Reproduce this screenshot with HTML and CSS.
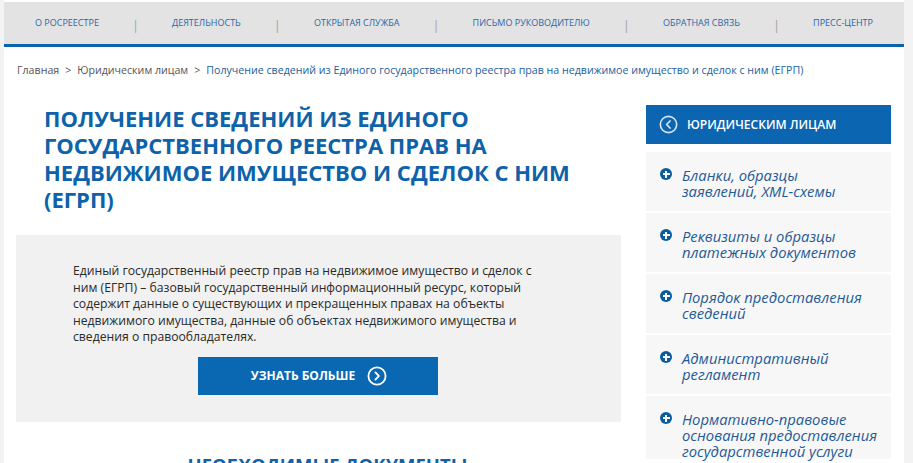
FILE: index.html
```html
<!DOCTYPE html>
<html lang="ru">
<head>
<meta charset="utf-8">
<title>Получение сведений из ЕГРП</title>
<link rel="stylesheet" href="styles.css">
</head>
<body>
<div class="page">
  <nav class="nav">
    <a class="nav-item">О Росреестре</a><span class="sep">|</span>
    <a class="nav-item">Деятельность</a><span class="sep">|</span>
    <a class="nav-item">Открытая служба</a><span class="sep">|</span>
    <a class="nav-item">Письмо руководителю</a><span class="sep">|</span>
    <a class="nav-item">Обратная связь</a><span class="sep">|</span>
    <a class="nav-item">Пресс-центр</a>
  </nav>
  <div class="crumbs">
    <span>Главная</span><span class="gt">&gt;</span><span>Юридическим лицам</span><span class="gt">&gt;</span><span class="current">Получение сведений из Единого государственного реестра прав на недвижимое имущество и сделок с ним (ЕГРП)</span>
  </div>
  <div class="columns">
    <main class="main">
      <h1 class="title">Получение сведений из Единого государственного реестра прав на недвижимое имущество и сделок с ним (ЕГРП)</h1>
      <section class="info">
        <p class="info-text">Единый государственный реестр прав на недвижимое имущество и сделок с ним (ЕГРП) – базовый государственный информационный ресурс, который содержит данные о существующих и прекращенных правах на объекты недвижимого имущества, данные об объектах недвижимого имущества и сведения о правообладателях.</p>
        <a class="btn">Узнать больше
          <svg class="btn-icon" width="20" height="20" viewBox="0 0 20 20"><circle cx="10" cy="10" r="8.6" fill="none" stroke="#fff" stroke-width="1.8"/><path d="M8.4 6.4 L11.9 10 L8.4 13.6" fill="none" stroke="#fff" stroke-width="1.9" stroke-linecap="round" stroke-linejoin="round"/></svg>
        </a>
      </section>
      <h2 class="subtitle">Необходимые документы</h2>
    </main>
    <aside class="side">
      <div class="side-head">
        <svg class="side-head-icon" width="19" height="19" viewBox="0 0 20 20"><circle cx="10" cy="10" r="8.6" fill="none" stroke="#d6e6f4" stroke-width="1.7"/><path d="M11.6 6.3 L8 10 L11.6 13.7" fill="none" stroke="#d6e6f4" stroke-width="1.8" stroke-linecap="round" stroke-linejoin="round"/></svg>
        <span>Юридическим лицам</span>
      </div>
      <ul class="side-list">
        <li class="side-item"><span class="plus"></span><span class="side-text narrow">Бланки, образцы заявлений, XML-схемы</span></li>
        <li class="side-item"><span class="plus"></span><span class="side-text">Реквизиты и образцы платежных документов</span></li>
        <li class="side-item"><span class="plus"></span><span class="side-text">Порядок предоставления сведений</span></li>
        <li class="side-item"><span class="plus"></span><span class="side-text">Административный регламент</span></li>
        <li class="side-item"><span class="plus"></span><span class="side-text">Нормативно-правовые основания предоставления государственной услуги</span></li>
      </ul>
    </aside>
  </div>
</div>
</body>
</html>
```

FILE: styles.css
```css
html, body {
  margin: 0;
  padding: 0;
}
body {
  background: #f3f3f3;
  font-family: "Open Sans", "Noto Sans", sans-serif;
  height: 463px;
  overflow: hidden;
}
.page {
  margin-left: 4px;
  width: 900px;
  min-height: 463px;
  background: #fff;
  padding-top: 2px;
}
.nav {
  height: 42px;
  background: #e3e3e3;
  border-bottom: 3px solid #0a63ab;
  display: flex;
  align-items: center;
  justify-content: space-between;
  padding: 0 31px;
  box-sizing: content-box;
}
.nav-item {
  font-size: 9px;
  text-transform: uppercase;
  color: #2c66a8;
  line-height: 14px;
}
.sep {
  color: #a0a0a0;
  font-size: 12px;
  line-height: 14px;
  margin-top: 6px;
}
.crumbs {
  margin-top: 15px;
  padding-left: 13px;
  font-size: 10.65px;
  line-height: 16px;
  color: #555;
  white-space: nowrap;
}
.crumbs .gt {
  margin: 0 6px;
}
.crumbs .current {
  color: #22609f;
}
.columns {
  display: flex;
  margin-top: 27px;
  padding-left: 12px;
}
.main {
  width: 605px;
}
.title {
  margin: 0;
  padding-left: 28px;
  width: 540px;
  font-size: 22px;
  line-height: 27px;
  font-weight: 700;
  color: #0d62a9;
  text-transform: uppercase;
}
.info {
  margin-top: 22px;
  background: #f1f1f1;
  padding: 28px 62px 27px 57px;
  display: flex;
  flex-direction: column;
  align-items: flex-start;
}
.info-text {
  margin: 0;
  font-size: 12.2px;
  line-height: 16.5px;
  color: #2a2a2a;
}
.btn {
  margin-top: 11px;
  margin-left: 125px;
  width: 240px;
  height: 38px;
  background: #0a67b1;
  color: #fff;
  display: flex;
  align-items: center;
  justify-content: center;
  gap: 12px;
  font-size: 12px;
  font-weight: 700;
  text-transform: uppercase;
  padding-left: 2px;
  box-sizing: border-box;
}
.btn-icon {
  display: block;
}
.subtitle {
  margin: 31px 0 0;
  text-align: center;
  padding-left: 18px;
  font-size: 18.5px;
  line-height: 24px;
  font-weight: 700;
  color: #0d62a9;
  text-transform: uppercase;
}
.side {
  margin-left: 25px;
  width: 245px;
}
.side-head {
  height: 39px;
  background: #0b65b0;
  display: flex;
  align-items: center;
  padding-left: 13px;
  gap: 9px;
  color: #fff;
  font-size: 12.1px;
  font-weight: 600;
  text-transform: uppercase;
}
.side-head-icon {
  display: block;
}
.side-list {
  list-style: none;
  margin: 8px 0 0;
  padding: 0;
  display: flex;
  flex-direction: column;
  gap: 2px;
}
.side-item {
  min-height: 59px;
  background: #f7f7f7;
  display: flex;
  align-items: flex-start;
  padding: 15px 0 0 14px;
  box-sizing: border-box;
  gap: 10px;
}
.plus {
  flex: none;
  width: 12px;
  height: 12px;
  border-radius: 50%;
  background: #0b5c9f;
  margin-top: 1px;
  position: relative;
}
.plus::before, .plus::after {
  content: "";
  position: absolute;
  background: #fff;
  left: 50%;
  top: 50%;
}
.plus::before {
  width: 7px;
  height: 2px;
  margin: -1px 0 0 -3.5px;
}
.plus::after {
  width: 2px;
  height: 7px;
  margin: -3.5px 0 0 -1px;
}
.side-text {
  width: 205px;
  font-size: 14.8px;
  line-height: 16px;
  font-style: italic;
  color: #1f5a98;
}
.side-text.narrow {
  width: 180px;
}
```
